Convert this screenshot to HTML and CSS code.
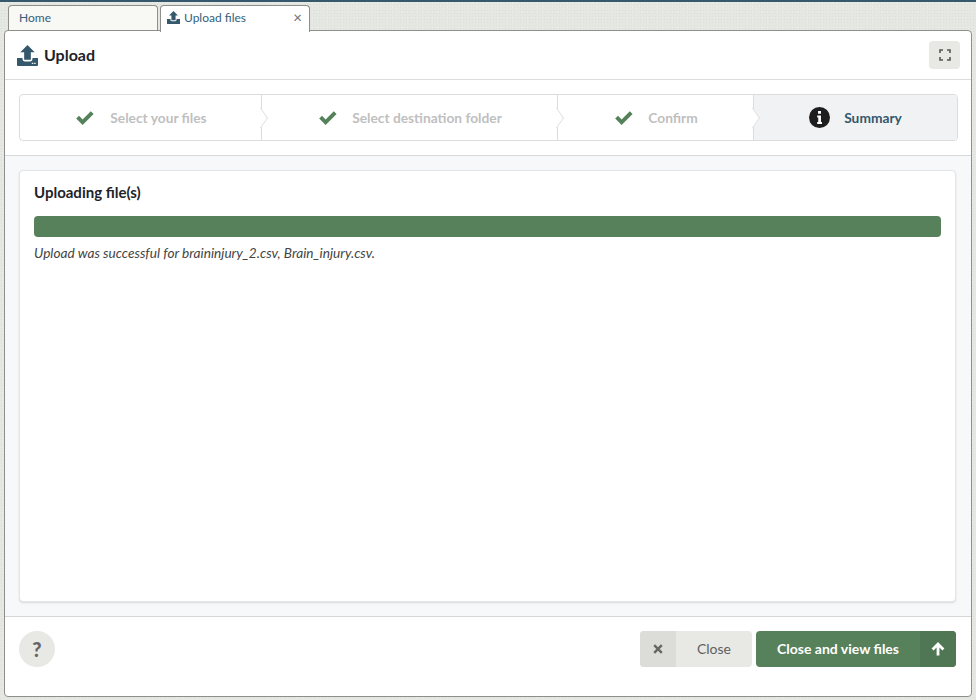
FILE: index.html
```html
<!DOCTYPE html>
<html lang="en">
<head>
<meta charset="utf-8">
<title>Upload files</title>
<link rel="stylesheet" href="styles.css">
</head>
<body>
<div class="topline"></div>
<nav class="tabs">
  <div class="tab tab-home"><span class="tab-label">Home</span></div>
  <div class="tab tab-active">
    <svg class="tab-icon" viewBox="0 0 22 22"><path class="ico" d="M11 0 L18.5 7.5 H14.5 V15.5 H7.5 V7.5 H3.5 Z"/><path class="ico" d="M0 13.5 H5.8 V15 Q5.8 17.2 8 17.2 H14 Q16.2 17.2 16.2 15 V13.5 H22 V21 Q22 22 21 22 H1 Q0 22 0 21 Z"/></svg>
    <span class="tab-label">Upload files</span>
    <span class="tab-close">×</span>
  </div>
</nav>
<main class="dialog">
  <header class="dialog-head">
    <svg class="head-icon" viewBox="0 0 22 22"><path class="ico" d="M11 0 L18.5 7.5 H14.5 V15.5 H7.5 V7.5 H3.5 Z"/><path class="ico" d="M0 13.5 H5.8 V15 Q5.8 17.2 8 17.2 H14 Q16.2 17.2 16.2 15 V13.5 H22 V21 Q22 22 21 22 H1 Q0 22 0 21 Z"/><path class="dots" d="M15.5 18.6h1.5v1.2h-1.5zM18 18.6h1.5v1.2H18z"/></svg>
    <h1 class="dialog-title">Upload</h1>
    <button class="expand" aria-label="Expand">
      <svg viewBox="0 0 12 12" width="12" height="12"><path class="corners" d="M1 4V1H4M8 1H11V4M11 8V11H8M4 11H1V8"/></svg>
    </button>
  </header>
  <section class="stepper-wrap">
    <ol class="stepper">
      <li class="step step-1"><svg class="check" viewBox="0 0 20 16"><path d="M1.2 8.6 L4 5.8 L7.6 9.4 L15.8 1.2 L18.6 4 L7.6 15 Z"/></svg><span>Select your files</span></li>
      <li class="step step-2"><svg class="check" viewBox="0 0 20 16"><path d="M1.2 8.6 L4 5.8 L7.6 9.4 L15.8 1.2 L18.6 4 L7.6 15 Z"/></svg><span>Select destination folder</span></li>
      <li class="step step-3"><svg class="check" viewBox="0 0 20 16"><path d="M1.2 8.6 L4 5.8 L7.6 9.4 L15.8 1.2 L18.6 4 L7.6 15 Z"/></svg><span>Confirm</span></li>
      <li class="step step-4"><svg class="info" viewBox="0 0 20 20"><circle cx="10" cy="10" r="10" fill="#1e1e1e"/><path fill="#fff" d="M8.6 3.8h2.8v2.7H8.6zM7.8 8.2h3.6v6h1v1.9H7.8v-1.9h1v-4.1h-1z"/></svg><span>Summary</span></li>
    </ol>
  </section>
  <section class="dialog-body">
    <article class="card">
      <h2 class="card-title">Uploading file(s)</h2>
      <div class="progress"></div>
      <p class="status">Upload was successful for braininjury_2.csv, Brain_injury.csv.</p>
    </article>
  </section>
  <footer class="dialog-foot">
    <button class="help" aria-label="Help">?</button>
    <div class="actions">
      <button class="btn btn-close"><span class="btn-ico">
        <svg viewBox="0 0 10 10" width="10" height="10"><path d="M1.2 1.2 L8.8 8.8 M8.8 1.2 L1.2 8.8"/></svg></span><span class="btn-text">Close</span></button>
      <button class="btn btn-go"><span class="btn-text">Close and view files</span><span class="btn-ico">
        <svg viewBox="0 0 14 14" width="14" height="14"><path d="M7 13.5 V2.5 M1.6 7.4 L7 2 L12.4 7.4"/></svg></span></button>
    </div>
  </footer>
</main>
</body>
</html>
```
FILE: styles.css
```css
* { box-sizing: border-box; }
html, body { margin: 0; height: 700px; overflow: hidden; }
body {
  background-color: #e5e7e2;
  background-image: radial-gradient(#dcdfd9 0.6px, transparent 0.8px), radial-gradient(#eef0ec 0.6px, transparent 0.8px);
  background-size: 3px 3px, 5px 5px;
  font-family: Lato, sans-serif;
  color: #1e2329;
  display: flex;
  flex-direction: column;
}
.topline { height: 2px; background: #35586c; flex: none; }
.tabs { display: flex; height: 28px; padding: 3px 0 0 8px; gap: 2px; flex: none; }
.tab {
  width: 150px;
  height: 26px;
  border: 1px solid #8e8e8c;
  border-bottom: 0;
  border-radius: 4px 4px 0 0;
  display: flex;
  align-items: center;
  font-size: 12px;
  color: #35607c;
}
.tab-home { background: #f8f8f5; padding: 0 0 2px 10px; }
.tab-active { background: #fff; padding: 0 7px 4px 6px; position: relative; z-index: 2; height: 27px; }
.tab-icon { width: 13px; height: 13px; margin-right: 4px; }
.tab-close { margin-left: auto; color: #6f6f6f; font-size: 15px; line-height: 1; }
.ico { fill: #35586c; }
.dots { fill: #fff; }
.dialog {
  margin: 0 4px 0 4px;
  height: 667px;
  background: #fff;
  border: 1px solid #8e8e8c;
  border-radius: 4px;
  display: flex;
  flex-direction: column;
  position: relative;
  z-index: 1;
}
.dialog-head {
  height: 49px;
  flex: none;
  display: flex;
  align-items: center;
  padding: 0 11px 0 12px;
  border-bottom: 1px solid #dcdcdc;
}
.head-icon { width: 21px; height: 21px; margin-right: 6px; }
.dialog-title { margin: 0 0 2px; font-size: 16px; font-weight: 700; color: #1e2329; }
.expand {
  margin-left: auto;
  width: 31px;
  height: 28px;
  border: 0;
  border-radius: 4px;
  background: #e8e9e4;
  display: flex;
  align-items: center;
  justify-content: center;
  padding: 0;
}
.corners { fill: none; stroke: #555; stroke-width: 1.6; }
.stepper-wrap {
  height: 76px;
  flex: none;
  padding: 14px 13px 0 14px;
  border-bottom: 1px solid #d6d8dc;
}
.stepper {
  margin: 0;
  padding: 0;
  list-style: none;
  display: grid;
  grid-template-columns: 241px 296px 196px 1fr;
  height: 47px;
  border: 1px solid #dcdcdc;
  border-radius: 4px;
}
.step {
  position: relative;
  display: flex;
  align-items: center;
  justify-content: center;
  gap: 15px;
  font-size: 13.75px;
  font-weight: 700;
  color: #bfbfbf;
}
.step + .step { border-left: 1px solid #dcdcdc; }
.step-1 { padding-left: 1px; }
.step-2, .step-3 { gap: 14px; padding-left: 1px; }
.step-4 { background: #f1f2f4; color: #35586c; gap: 14px; border-radius: 0 3px 3px 0; }
.step-1::after, .step-2::after, .step-3::after {
  content: "";
  position: absolute;
  right: -7px;
  top: 50%;
  width: 14px;
  height: 14px;
  background: #fff;
  border-top: 1px solid #dcdcdc;
  border-right: 1px solid #dcdcdc;
  transform: translateY(-50%) scaleX(0.7) rotate(45deg);
  z-index: 1;
}
.check { width: 20px; height: 16px; }
.check path { fill: #55815a; }
.info { width: 21px; height: 21px; }
.dialog-body {
  height: 460px;
  flex: none;
  background: #f7f8fa;
  padding: 14px 15px 14px 14px;
}
.card {
  height: 100%;
  background: #fff;
  border: 1px solid #e4e5e6;
  border-radius: 4px;
  box-shadow: 0 1px 2px rgba(0, 0, 0, 0.12);
  padding: 12px 14px;
}
.card-title { margin: 0 0 15px; font-size: 15px; line-height: 18px; font-weight: 700; color: #1e2329; }
.progress { height: 21px; background: #57815b; border-radius: 4px; }
.status { margin: 8px 0 0; font-size: 13.65px; line-height: 16px; font-style: italic; color: #444; }
.dialog-foot {
  flex: 1;
  display: flex;
  justify-content: space-between;
  align-items: flex-start;
  padding: 14px 15px 0 14px;
  border-top: 1px solid #d6d6d6;
}
.help {
  width: 36px;
  height: 36px;
  border: 0;
  border-radius: 50%;
  background: #e8e9e4;
  color: #666;
  font: 900 20px/36px Lato, sans-serif;
  padding: 0;
}
.actions { display: flex; gap: 4px; }
.btn {
  height: 36px;
  border: 0;
  border-radius: 4px;
  padding: 0;
  display: flex;
  align-items: stretch;
  overflow: hidden;
  font: 400 14px Lato, sans-serif;
}
.btn-ico { display: flex; align-items: center; justify-content: center; width: 36px; }
.btn-text { display: flex; align-items: center; justify-content: center; flex: 1; padding-bottom: 1px; }
.btn-close { width: 112px; background: #e8e9e4; color: #5f5f5f; }
.btn-close .btn-ico { background: #dcddd8; }
.btn-close svg path { stroke: #666; stroke-width: 2.4; fill: none; }
.btn-go { width: 200px; background: #57815b; color: #fff; font-weight: 700; }
.btn-go .btn-ico { background: #4f7753; }
.btn-go svg path { stroke: #fff; stroke-width: 2.8; fill: none; }
```
